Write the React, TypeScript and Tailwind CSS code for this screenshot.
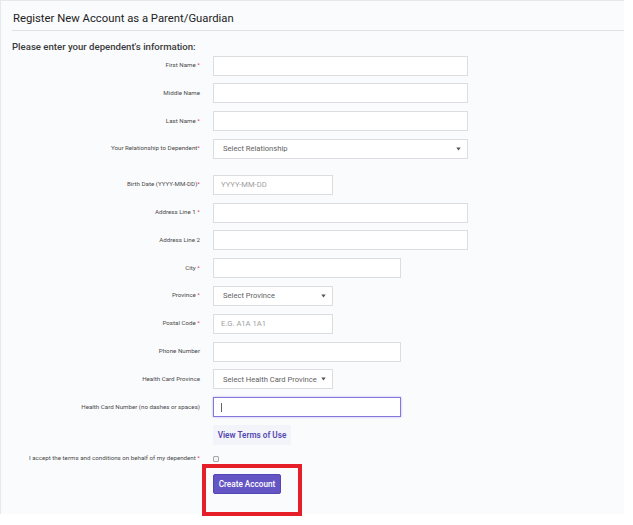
import React from "react";

type Row = {
	label: string;
	req?: "space" | "tight";
	kind: "input" | "select" | "focus";
	width: number;
	placeholder?: string;
	extraTop?: boolean;
};

const rows: Row[] = [
	{ label: "First Name", req: "space", kind: "input", width: 255 },
	{ label: "Middle Name", kind: "input", width: 255 },
	{ label: "Last Name", req: "space", kind: "input", width: 255 },
	{ label: "Your Relationship to Dependent", req: "tight", kind: "select", width: 255, placeholder: "Select Relationship" },
	{ label: "Birth Date (YYYY-MM-DD)", req: "tight", kind: "input", width: 120, placeholder: "YYYY-MM-DD", extraTop: true },
	{ label: "Address Line 1", req: "space", kind: "input", width: 255 },
	{ label: "Address Line 2", kind: "input", width: 255 },
	{ label: "City", req: "space", kind: "input", width: 188 },
	{ label: "Province", req: "space", kind: "select", width: 120, placeholder: "Select Province" },
	{ label: "Postal Code", req: "space", kind: "input", width: 120, placeholder: "E.G. A1A 1A1" },
	{ label: "Phone Number", kind: "input", width: 188 },
	{ label: "Health Card Province", kind: "select", width: 120, placeholder: "Select Health Card Province" },
	{ label: "Health Card Number (no dashes or spaces)", kind: "focus", width: 188 },
];

function Caret() {
	return (
		<svg width="5" height="4" viewBox="0 0 5 4" className="shrink-0">
			<path d="M0.3 0.5 L4.7 0.5 L2.5 3.6 Z" fill="#555" />
		</svg>
	);
}

function Field({ row }: { row: Row }) {
	if (row.kind === "select") {
		return (
			<div
				className="h-[20px] bg-white border border-[#dcdde0] flex items-center pl-[9px] pr-[6px] gap-1 overflow-hidden"
				style={{ width: row.width }}
			>
				<span className="flex-1 min-w-0 whitespace-nowrap overflow-hidden text-[7.6px] text-[#5f5f5f]">
					{row.placeholder}
				</span>
				<Caret />
			</div>
		);
	}
	if (row.kind === "focus") {
		return (
			<div
				className="h-[20px] bg-white border border-[#8478dc] shadow-[0_0_2px_#b7aef0] flex items-center pl-[7px]"
				style={{ width: row.width }}
			>
				<div className="w-px h-[9px] bg-[#666]" />
			</div>
		);
	}
	return (
		<div
			className="h-[20px] bg-white border border-[#dcdde0] flex items-center pl-[7px]"
			style={{ width: row.width }}
		>
			{row.placeholder && <span className="text-[7.6px] text-[#a0a0a0]">{row.placeholder}</span>}
		</div>
	);
}

export default function App() {
	return (
		<div className="w-[633px] h-[525px] bg-white font-['Roboto','Liberation_Sans',sans-serif]">
			<div className="relative w-[624px] h-[514px] bg-[#fafbfd] border-t border-l border-[#e6e8eb]">
				{/* header */}
				<div className="ml-[11px] h-[30px] border-b border-[#dfe1e4] flex items-end pb-[6px]">
					<h1 className="text-[11.3px] text-[#222] leading-none pl-px">
						Register New Account as a Parent/Guardian
					</h1>
				</div>
				<div className="pl-[11px] pt-[11px] text-[9.6px] font-medium text-[#3a3a3a] leading-none">
					Please enter your dependent's information:
				</div>

				{/* form */}
				<div className="mt-[4px] flex flex-col">
					{rows.map((row, i) => (
						<div
							key={row.label}
							className="flex items-center gap-[13px]"
							style={{ marginTop: i === 0 ? 0 : row.extraTop ? 15.8 : 7.8 }}
						>
							<div className="w-[199px] text-right text-[6.2px] text-[#4a4a4a] whitespace-nowrap">
								{row.label}
								{row.req === "space" && <span className="text-[#e04050]"> *</span>}
								{row.req === "tight" && <span className="text-[#e04050]">*</span>}
							</div>
							<Field row={row} />
						</div>
					))}

					<div className="flex mt-[8px] pl-[212px]">
						<button className="h-[20px] w-[78px] bg-[#f3f4fa] rounded-[2px] text-[8.2px] font-semibold text-[#5548b0]">
							View Terms of Use
						</button>
					</div>

					<div className="flex items-center gap-[13px] mt-[9px]">
						<div className="w-[199px] text-right text-[6.2px] text-[#4a4a4a] whitespace-nowrap">
							I accept the terms and conditions on behalf of my dependent
							<span className="text-[#e04050]"> *</span>
						</div>
						<div className="w-[6px] h-[6px] border border-[#a9a9a9] rounded-[1px] bg-[#f4f4f4]" />
					</div>

					<div className="flex mt-[11px] pl-[212px]">
						<button className="h-[20px] w-[68px] bg-[#6455c4] border border-[#5546b5] rounded-[2px] text-[8.2px] font-medium text-white">
							Create Account
						</button>
					</div>
				</div>

				{/* annotation */}
				<div className="absolute left-[201px] top-[463px] w-[100px] h-[52px] border-[4px] border-[#e61e27]" />
			</div>
		</div>
	);
}
